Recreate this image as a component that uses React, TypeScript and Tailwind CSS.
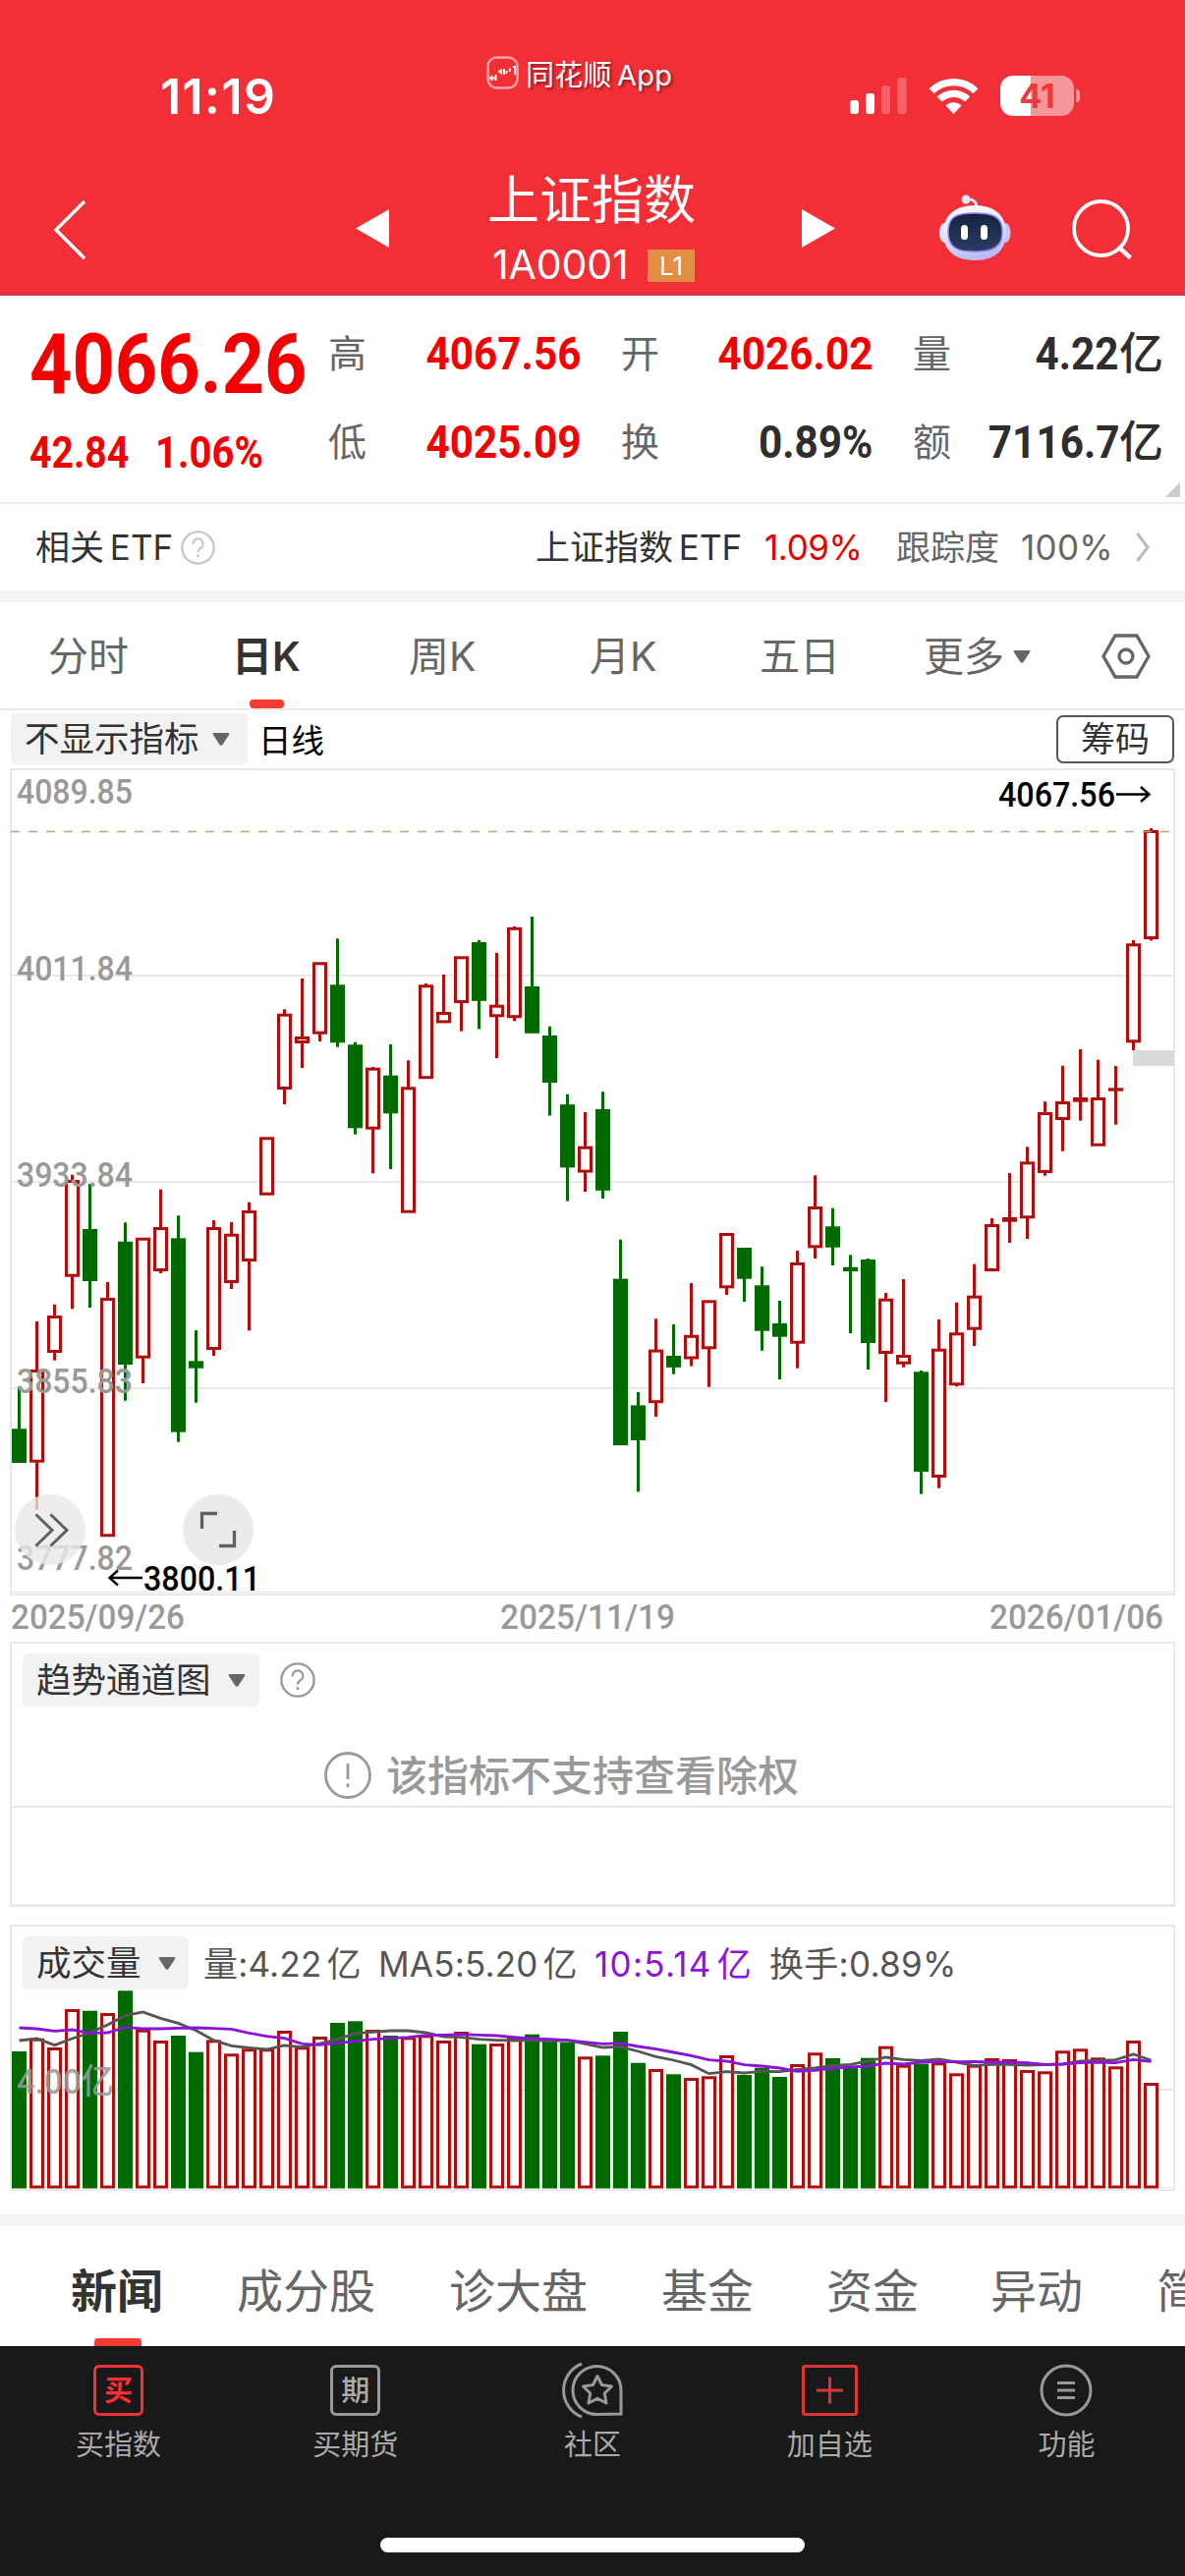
import React from 'react';

type Candle = [number, number, number, number, 'r' | 'g'];

// high, body top, body bottom, low (y on the chart), direction
const candles: Candle[] = [
  [1411.7, 1454.3, 1489, 1489, 'g'], [1345, 1394, 1488.7, 1536.7, 'r'], [1327.7, 1339, 1377, 1384.7, 'r'],
  [1195.7, 1201, 1299.7, 1332.3, 'r'], [1205, 1251, 1304, 1331, 'g'], [1305, 1321, 1564.3, 1564.3, 'r'],
  [1244.3, 1263.7, 1389, 1425.7, 'g'], [1259.7, 1259.7, 1382.7, 1408, 'r'], [1210.7, 1249, 1294, 1296, 'r'],
  [1237.3, 1260.3, 1457.7, 1467.7, 'g'], [1354, 1385.3, 1392.7, 1427.7, 'g'], [1242, 1249, 1374, 1380, 'r'],
  [1244, 1255.7, 1306, 1312, 'r'], [1223.7, 1232, 1284, 1354.3, 'r'], [1157.3, 1157.3, 1216.7, 1216.7, 'r'],
  [1027.3, 1031.7, 1109, 1124, 'r'], [996, 1055, 1062, 1087, 'r'], [979.3, 979.3, 1052.7, 1060, 'r'],
  [955.3, 1002.3, 1061.3, 1065.7, 'g'], [1060.7, 1063.3, 1148.3, 1154.7, 'g'], [1086, 1086.7, 1149.7, 1194.3, 'r'],
  [1063, 1094.7, 1133.3, 1190, 'g'], [1079.3, 1106.3, 1234.7, 1234.7, 'r'], [1001, 1002.3, 1098.2, 1098.2, 'r'],
  [992, 1030, 1041.4, 1041.4, 'r'], [973.3, 973.3, 1021, 1049.6, 'r'], [956.8, 959, 1018.8, 1047.4, 'g'],
  [969.8, 1022.7, 1035.3, 1077, 'r'], [943, 943.8, 1036.2, 1039.2, 'r'], [933, 1004, 1051.8, 1051.8, 'g'],
  [1044.8, 1054, 1102, 1135.5, 'g'], [1113.8, 1124.2, 1188.4, 1222.6, 'g'], [1132, 1166.7, 1193.6, 1213, 'r'],
  [1111.2, 1129, 1211.8, 1220, 'g'], [1261.7, 1301.6, 1471.1, 1471.1, 'g'], [1417, 1430.4, 1466, 1518.4, 'g'],
  [1342.3, 1373.6, 1428.2, 1442, 'r'], [1348, 1380, 1391.8, 1398.7, 'g'], [1306, 1358.8, 1383.5, 1390.5, 'r'],
  [1323.3, 1323.3, 1373.3, 1411.7, 'r'], [1255, 1255, 1311.3, 1318, 'r'], [1270, 1270, 1301.7, 1325, 'g'],
  [1289.3, 1308.3, 1354.7, 1374.7, 'g'], [1324, 1347, 1360.7, 1404, 'g'], [1273, 1285, 1367.7, 1392.7, 'r'],
  [1196.3, 1228, 1270.3, 1281, 'r'], [1229.7, 1248.3, 1269.7, 1288, 'g'], [1277.3, 1289.7, 1294, 1357, 'g'],
  [1281, 1282, 1367, 1394, 'g'], [1316, 1321.7, 1378, 1427, 'r'], [1302, 1379, 1388.7, 1391.7, 'r'],
  [1395, 1396.3, 1498, 1520.7, 'g'], [1343, 1372.7, 1504, 1514.7, 'r'], [1325.7, 1356.3, 1410.3, 1411.3, 'r'],
  [1286.7, 1318.7, 1353.7, 1370, 'r'], [1240, 1246, 1294, 1294, 'r'], [1194, 1239, 1243.7, 1265, 'r'],
  [1167.3, 1182.3, 1240.3, 1261, 'r'], [1121.3, 1132, 1194, 1196.7, 'r'], [1084.7, 1121, 1140, 1171.7, 'r'],
  [1068, 1117, 1121.7, 1140.7, 'r'], [1078.7, 1117, 1166.7, 1166.7, 'r'], [1085, 1107.3, 1110.7, 1144.7, 'r'],
  [957, 960.3, 1061.3, 1069, 'r'], [843, 845, 956, 957.3, 'r'],
];

const volumeTops = [
  2088, 2074.7, 2084, 2045, 2046.7, 2049, 2026.3, 2065.7, 2077, 2072, 2088.7, 2076.3, 2090.3, 2085.3, 2085.3, 2067,
  2083.3, 2073, 2059, 2057.3, 2066, 2072, 2073.3, 2071.3, 2077, 2068, 2080.7, 2080, 2073.7, 2070.7, 2077, 2078.7,
  2093.3, 2092.3, 2068, 2099.7, 2106, 2111.3, 2115, 2113.3, 2092, 2112, 2104.7, 2114, 2101, 2089.3, 2095, 2105,
  2094.7, 2082.7, 2101.7, 2100.7, 2099.3, 2110.3, 2101.7, 2095, 2096, 2107, 2108.3, 2087.3, 2085.3, 2094.3, 2103.3,
  2077, 2120,
];

const ma5 = [
  381, 375, 395, 375, 357, 333, 305, 294, 313, 328, 350, 380, 397, 403, 408, 396, 401, 390, 377, 359, 355, 351, 351,
  357, 369, 371, 377, 380, 381, 380, 383, 380, 391, 402, 400, 414, 430, 441, 455, 482, 476, 480, 475, 476, 469, 465,
  457, 454, 444, 432, 439, 442, 438, 447, 457, 454, 454, 456, 455, 453, 444, 442, 440, 423, 441,
];
const ma10 = [
  342, 345, 352, 348, 358, 357, 340, 345, 345, 343, 342, 344, 346, 358, 368, 374, 391, 394, 389, 383, 377, 374, 371,
  365, 364, 362, 364, 366, 371, 375, 377, 380, 386, 391, 389, 399, 407, 417, 427, 440, 444, 455, 459, 465, 475, 472,
  466, 462, 459, 450, 453, 447, 446, 446, 445, 447, 447, 449, 454, 453, 449, 447, 449, 439, 445,
];

const RED = '#ae0e0e';
const GREEN = '#006900';
const cx = (i: number) => 19.5 + 18 * i;
const line = (values: number[]) => values.map((v, i) => `${cx(i)},${1950 + v / 3}`).join(' ');

function CandleShape({ c, x }: { c: Candle; x: number }) {
  const [hi, top, bottom, lo, dir] = c;
  const color = dir === 'r' ? RED : GREEN;
  const hollow = dir === 'r' && bottom - top > 6;
  return (
    <g>
      {hi < top && <rect x={x - 1.5} y={hi} width={3} height={top - hi + 1} fill={color} />}
      {lo > bottom && <rect x={x - 1.5} y={bottom - 1} width={3} height={lo - bottom + 1} fill={color} />}
      {hollow ? (
        <rect x={x - 6} y={top + 1.5} width={12} height={bottom - top - 3} fill="#fff" stroke={color} strokeWidth={3} />
      ) : (
        <rect x={x - 7.5} y={top} width={15} height={bottom - top} fill={color} />
      )}
    </g>
  );
}

function Num({ x, y, w, children, fill = '#999' }: { x: number; y: number; w: number; children: string; fill?: string }) {
  return (
    <text x={x} y={y} textLength={w} lengthAdjust="spacingAndGlyphs" fill={fill} fontSize={35} fontWeight={500} fontFamily="Roboto, sans-serif">
      {children}
    </text>
  );
}

function PriceChart() {
  return (
    <svg className="block w-[1206px] h-[886px]" viewBox="0 782 1206 886">
      <g fill="#e8e8e8">
        <rect x={10} y={782} width={1186} height={2} />
        <rect x={10} y={782} width={2} height={842} />
        <rect x={1194} y={782} width={2} height={842} />
        <rect x={10} y={1620} width={1186} height={1} />
        <rect x={10} y={1622} width={1186} height={2} />
        {[992, 1202, 1412].map((y) => <rect key={y} x={12} y={y} width={1182} height={2} />)}
      </g>
      <rect x={1153} y={1069} width={42} height={16} fill="#dadada" />
      {candles.map((c, i) => <CandleShape key={i} c={c} x={cx(i)} />)}
      <path d="M11 846.5H1192" stroke="#d39b66" strokeWidth={1.4} strokeDasharray="9 9" />
      <Num x={17} y={818} w={118}>4089.85</Num>
      <Num x={17} y={998} w={118}>4011.84</Num>
      <Num x={17} y={1208} w={118}>3933.84</Num>
      <Num x={17} y={1418} w={118}>3855.83</Num>
      <Num x={17} y={1598} w={118}>3777.82</Num>
      <Num x={1016} y={821} w={119} fill="#000">4067.56</Num>
      <path d="M1136 808.5H1169M1161 801L1169.500 808.500L1161 816" fill="none" stroke="#000" strokeWidth={2.4} />
      <Num x={146} y={1619} w={119} fill="#000">3800.11</Num>
      <path d="M145 1606H112M120 1598.500L111.500 1606L120 1613.500" fill="none" stroke="#000" strokeWidth={2.4} />
      <circle cx={51} cy={1557} r={36} fill="#e9e9e9" fillOpacity={0.8} />
      <circle cx={222} cy={1557} r={36} fill="#ebebeb" />
      <path d="M36.500 1541.500L53 1557.500L36.500 1573.500M51.500 1541.500L68 1557.500L51.500 1573.500" fill="none" stroke="#606060" strokeWidth={3} />
      <path d="M205.500 1556V1540.500H221M223 1573.500H238.500V1558" fill="none" stroke="#606060" strokeWidth={3.3} />
      <Num x={11} y={1658} w={177}>2025/09/26</Num>
      <Num x={509} y={1658} w={178}>2025/11/19</Num>
      <Num x={1007} y={1658} w={177}>2026/01/06</Num>
    </svg>
  );
}

function VolumeChart() {
  return (
    <svg className="block w-[1206px] h-[205px]" viewBox="0 2025 1206 205">
      <g fill="#e8e8e8">
        <rect x={12} y={2126} width={1182} height={2} />
        <rect x={12} y={2226} width={1182} height={1} />
      </g>
      {volumeTops.map((top, i) =>
        candles[i][4] === 'g' ? (
          <rect key={i} x={cx(i) - 7.5} y={top} width={15} height={2227.5 - top} fill={GREEN} />
        ) : (
          <rect key={i} x={cx(i) - 6} y={top + 1.5} width={12} height={2224.5 - top} fill="#fff" stroke={RED} strokeWidth={3} />
        ),
      )}
      <text x={17} y={2131} textLength={99} lengthAdjust="spacingAndGlyphs" fill="#999" fillOpacity={0.9} fontSize={35} fontWeight={500} fontFamily="Roboto, 'Noto Sans CJK SC', sans-serif">4.00亿</text>
      <polyline points={line(ma5)} fill="none" stroke="#555" strokeWidth={2.8} />
      <polyline points={line(ma10)} fill="none" stroke="#8b12d6" strokeWidth={2.8} />
    </svg>
  );
}

function Caret() {
  return (
    <svg className="w-[18px] h-[13px]" viewBox="0 0 18 13">
      <path d="M1.500 0H16.500Q18 .5 17 2L10.500 12Q9 13.500 7.500 12L1 2Q0 .5 1.500 0Z" fill="#666" />
    </svg>
  );
}

function Question({ size, color }: { size: number; color: string }) {
  return (
    <svg width={size} height={size} viewBox="0 0 36 36" fill="none" stroke={color} strokeWidth={2.4}>
      <circle cx={18} cy={18} r={16.600} />
      <path d="M12.800 14.500A5.300 5.300 0 1 1 20.500 18.500Q18 20 18 22.500" strokeWidth={2.300} />
      <circle cx={18} cy={26.500} r={1.600} fill={color} stroke="none" />
    </svg>
  );
}

function StatusBar() {
  return (
    <div className="h-[150px] flex items-start">
      <span className="ml-[163px] mt-[68px] w-[332px] text-[50px] leading-[60px] font-semibold tracking-[1.4px]">11:19</span>
      <svg className="mt-[57px] w-[33px] h-[34px]" viewBox="0 0 33 34">
        <rect x={1.500} y={1.500} width={30} height={31} rx={9} fill="none" stroke="#fff" strokeOpacity={0.55} strokeWidth={2.500} />
        <path d="M3 22.500H8M5.500 20V25M9.500 19V25M12 16L15 14.500V18.500M18 13V19M21 15L20 18M24 12.500V16M27 11H29V19" stroke="#fff3e8" strokeWidth={2} fill="none" />
      </svg>
      <span className="ml-[7px] mt-[57px] w-[330px] text-[29px] leading-[40px] font-normal tracking-[0.2px] [text-shadow:2px_2px_3px_rgba(0,0,0,0.45)]">
        同花顺 <span className="ml-[-3px]">App</span>
      </span>
      <svg className="mt-[77px] w-[58px] h-[40px]" viewBox="865 77 58 40" fill="#fff">
        <rect x={865} y={102} width={9} height={14} rx={3} />
        <rect x={881} y={95} width={9} height={21} rx={3} />
        <rect x={897} y={87} width={9} height={29} rx={3} opacity={0.25} />
        <rect x={913.500} y={79} width={9} height={37} rx={3} opacity={0.25} />
      </svg>
      <svg className="ml-[22px] mt-[79px] w-[51px] h-[37px]" viewBox="0 0 51 37" fill="none" stroke="#fff" strokeWidth={7.200}>
        <path d="M3 13.800A32 32 0 0 1 48 13.800" />
        <path d="M11.300 22A20.500 20.500 0 0 1 39.700 22" />
        <path d="M25.500 37L17.500 28.500A11.500 11.500 0 0 1 33.500 28.500Z" fill="#fff" stroke="none" />
      </svg>
      <div className="ml-[22px] mt-[77px] w-[75px] h-[41px] rounded-[13px] bg-linear-to-r from-white from-[41%] to-[#f8979b] to-[41%] flex items-center justify-center">
        <span className="text-[34px] leading-none font-bold text-[#f0383f]">41</span>
      </div>
      <div className="mt-[91px] ml-[2px] w-[4px] h-[13px] rounded-r-full bg-[#f8979b]" />
    </div>
  );
}

function NavBar() {
  return (
    <div className="h-[149px] flex items-start">
      <svg className="ml-[54px] mt-[53px] w-[34px] h-[62px]" viewBox="0 0 34 62">
        <path d="M32 2L3 31L32 60" fill="none" stroke="#fff" strokeWidth={3.500} />
      </svg>
      <svg className="ml-[274px] mt-[63px] w-[34px] h-[39px]" viewBox="0 0 34 39"><path d="M34 0V39L0 19.500Z" fill="#fff" /></svg>
      <div className="ml-[100px] mt-[22px] w-[212px] flex flex-col">
        <span className="text-[53px] leading-[64px] whitespace-nowrap">上证指数</span>
        <div className="mt-[11px] flex items-center pl-[5px]">
          <span className="text-[41px] leading-[44px] w-[158px] tracking-[-0.1px]">1A0001</span>
          <span className="mt-[2px] w-[48px] h-[33px] bg-[#e28e44] text-[26px] leading-[33px] text-center">L1</span>
        </div>
      </div>
      <svg className="ml-[108px] mt-[63px] w-[34px] h-[39px]" viewBox="0 0 34 39"><path d="M0 0V39L34 19.500Z" fill="#fff" /></svg>
      <svg className="ml-[106px] mt-[48px] w-[73px] h-[68px]" viewBox="0 0 73 68">
        <defs>
          <linearGradient id="head" x1="0" y1="0" x2="0.300" y2="1">
            <stop offset="0" stopColor="#ffffff" /><stop offset="0.600" stopColor="#dfe3f8" /><stop offset="1" stopColor="#b9bdf5" />
          </linearGradient>
          <linearGradient id="face" x1="0" y1="0" x2="0" y2="1">
            <stop offset="0" stopColor="#16233f" /><stop offset="1" stopColor="#2b3c63" />
          </linearGradient>
        </defs>
        <circle cx={27} cy={5} r={4.500} fill="#e9eafa" />
        <path d="M28 5Q38 4 38 14" fill="none" stroke="#dfe0f6" strokeWidth={3} />
        <ellipse cx={5} cy={39} rx={5} ry={10} fill="#dfe3fa" />
        <ellipse cx={67.500} cy={39} rx={5} ry={10} fill="#c4c5f2" />
        <path d="M36 11C57 11 68 22 68 39C68 57 56 67 36 67C16 67 4 57 4 39C4 22 15 11 36 11Z" fill="url(#head)" />
        <path d="M36 19C54 19 64 22 64 38C64 54 54 58 36 58C18 58 9 54 9 38C9 22 18 19 36 19Z" fill="url(#face)" stroke="#8f7df0" strokeWidth={1.500} />
        <rect x={22} y={31} width={7} height={15} rx={3.500} fill="#fff" />
        <rect x={42} y={31} width={7} height={15} rx={3.500} fill="#fff" />
      </svg>
      <svg className="ml-[62px] mt-[52px] w-[62px] h-[62px]" viewBox="0 0 62 62" fill="none" stroke="#fff" strokeWidth={3.800}>
        <circle cx={29.500} cy={30.500} r={27.500} /><path d="M48 50L59.500 60.500" strokeWidth={4.500} />
      </svg>
    </div>
  );
}

function Quote() {
  const cells = [
    ['高', '4067.56', true], ['开', '4026.02', true], ['量', '4.22亿', false],
    ['低', '4025.09', true], ['换', '0.89%', false], ['额', '7116.7亿', false],
  ] as const;
  return (
    <section className="relative h-[210px] flex">
      <div className="w-[334px] pl-[30px] text-[#f50000] font-[Roboto] font-bold whitespace-nowrap">
        <div className="mt-[27px] w-[304px] text-[86px] leading-[86px] origin-left scale-x-[0.88]">4066.26</div>
        <div className="mt-[23px] flex text-[45px] leading-[48px]">
          <span className="w-[128px] origin-left scale-x-[0.87]">42.84</span>
          <span className="w-[128px] origin-left scale-x-[0.89]">1.06%</span>
        </div>
      </div>
      <div className="mt-[14px] grid h-[180px] grid-cols-[257px_256px_255px] gap-x-[41px] grid-rows-2">
        {cells.map(([k, v, red]) => (
          <div key={k} className="flex items-center">
            <span className="text-[39px] leading-[60px] text-[#666]">{k}</span>
            <span className={`ml-auto text-[47px] leading-[60px] origin-right scale-x-[0.9] font-bold font-[Roboto] ${red ? 'text-[#f50000]' : 'text-[#2e2e2e]'}`}>
              {v.replace('亿', '')}
            </span>
            {v.endsWith('亿') && <span className="text-[45px] leading-[60px] font-medium text-[#2e2e2e]">亿</span>}
          </div>
        ))}
      </div>
      <svg className="absolute right-[5px] bottom-[5px] w-[15px] h-[15px]" viewBox="0 0 15 15"><path d="M15 0V15H0Z" fill="#ccc" /></svg>
    </section>
  );
}

function EtfRow() {
  return (
    <section className="h-[90px] border-t-2 border-[#ececec] flex items-center text-[35px] leading-[50px] text-[#333] whitespace-nowrap">
      <span className="ml-[36px] w-[148px]">相关 <span className="ml-[-4px]">ETF</span></span>
      <Question size={35} color="#c8c8c8" />
      <span className="ml-[326px] w-[233px]">上证指数 <span className="ml-[-4px]">ETF</span></span>
      <span className="w-[134px] text-[#e60000] tracking-[-0.4px]">1.09%</span>
      <span className="w-[127px] text-[#666]">跟踪度</span>
      <span className="w-[117px] text-[#666] tracking-[0.3px]">100%</span>
      <svg className="w-[14px] h-[30px]" viewBox="0 0 14 30"><path d="M1.500 1L12 15L1.500 29" fill="none" stroke="#bbb" strokeWidth={3} /></svg>
    </section>
  );
}

function PeriodTabs() {
  return (
    <nav className="relative h-[110px] border-b-2 border-[#ebebeb] flex items-center pt-[2px] text-[41px] leading-[60px] text-[#666] whitespace-nowrap">
      <span className="ml-[49px] w-[187px]">分时</span>
      <span className="w-[180px] font-bold text-[#333]">日<span className="font-semibold">K</span></span>
      <span className="w-[184px]">周K</span>
      <span className="w-[173px]">月K</span>
      <span className="w-[167px]">五日</span>
      <span className="w-[91px]">更多</span>
      <Caret />
      <svg className="ml-[72px] w-[50px] h-[46px]" viewBox="0 0 50 46" fill="none" stroke="#666" strokeWidth={3.300}>
        <path d="M14 2H36L48 23L36 44H14L2 23Z" /><circle cx={25} cy={23} r={7} />
      </svg>
      <i className="absolute left-[254px] bottom-0 w-[35px] h-[9px] rounded-[4px] bg-[#f43b33]" />
    </nav>
  );
}

function Chip({ label, className }: { label: string; className: string }) {
  return (
    <span className={`flex items-center justify-between bg-[#f2f2f2] rounded-[6px] pl-[14px] text-[35.5px] leading-[52px] text-[#333] whitespace-nowrap ${className}`}>
      <span className="mt-[2px]">{label}</span><Caret />
    </span>
  );
}

function NewsTabs() {
  return (
    <nav className="relative h-[122px] overflow-hidden flex items-center pt-[10px] text-[47px] leading-[70px] text-[#666] whitespace-nowrap">
      <span className="ml-[72px] w-[169px] shrink-0 font-bold text-[#333]">新闻</span>
      <span className="w-[216px] shrink-0">成分股</span>
      <span className="w-[216px] shrink-0">诊大盘</span>
      <span className="w-[168px] shrink-0">基金</span>
      <span className="w-[167px] shrink-0">资金</span>
      <span className="w-[169px] shrink-0">异动</span>
      <span className="shrink-0">简况</span>
      <i className="absolute left-[96px] bottom-[-4px] w-[48px] h-[12px] rounded-[4px] bg-[#f43b33]" />
    </nav>
  );
}

function BottomBar() {
  const items = [
    {
      label: '买指数',
      icon: <span className="w-[51px] h-[52px] border-[3px] border-[#ee3339] rounded-[6px] text-[29px] leading-[47px] text-center font-bold text-[#ff2d37]">买</span>,
    },
    {
      label: '买期货',
      icon: <span className="w-[51px] h-[52px] border-[3px] border-[#999] rounded-[6px] text-[29px] leading-[47px] text-center font-medium text-[#aaa]">期</span>,
    },
    {
      label: '社区',
      icon: (
        <svg className="w-[62px] h-[58px]" viewBox="0 0 62 58" fill="none" stroke="#999" strokeWidth={3}>
          <path d="M20 2A29 29 0 0 0 20 56" />
          <path d="M60 53V29A24.500 24.500 0 1 0 35.500 53.500Z" />
          <path d="M36 14.500L40.500 23.500L50.500 25L43.300 32L45 42L36 37.300L27 42L28.700 32L21.500 25L31.500 23.500Z" strokeLinejoin="round" />
        </svg>
      ),
    },
    {
      label: '加自选',
      icon: (
        <svg className="w-[57px] h-[52px]" viewBox="0 0 57 52" fill="none" stroke="#dd3535" strokeWidth={3}>
          <rect x={1.500} y={1.500} width={54} height={49} rx={2} /><path d="M15 26H42M28.500 12.500V39.500" />
        </svg>
      ),
    },
    {
      label: '功能',
      icon: (
        <svg className="w-[54px] h-[54px]" viewBox="0 0 54 54" fill="none" stroke="#999" strokeWidth={3}>
          <circle cx={27} cy={27} r={25} /><path d="M18 19.500H36M18 27H36M18 34.500H36" />
        </svg>
      ),
    },
  ];
  return (
    <footer className="h-[234px] bg-[#191919] flex flex-col items-center">
      <div className="w-full h-[195px] grid grid-cols-5">
        {items.map((it) => (
          <div key={it.label} className="flex flex-col items-center pt-[15px]">
            <div className="h-[60px] flex items-center">{it.icon}</div>
            <span className="mt-[6px] text-[29px] leading-[40px] text-[#aaa]">{it.label}</span>
          </div>
        ))}
      </div>
      <div className="w-[432px] h-[15px] rounded-full bg-white" />
    </footer>
  );
}

export default function App() {
  return (
    <main className="w-[1206px] h-[2622px] overflow-hidden bg-white flex flex-col font-[Inter,'Noto_Sans_CJK_SC',sans-serif]">
      <header className="h-[301px] shrink-0 bg-[#f22f36] border-b-2 border-[#c9404a] text-white">
        <StatusBar />
        <NavBar />
      </header>
      <Quote />
      <EtfRow />
      <div className="h-[12px] bg-[#f4f4f4]" />
      <PeriodTabs />
      <div className="h-[59px] flex items-center pb-[1px]">
        <Chip label="不显示指标" className="ml-[11px] w-[241px] h-[52px] pr-[18px]" />
        <span className="mt-[3px] ml-[11px] text-[33.5px] leading-[50px] text-black">日线</span>
        <span className="ml-auto mr-[11px] w-[120px] h-[49px] border-2 border-[#555] rounded-[7px] text-center text-[35px] leading-[45px] text-[#333]">筹码</span>
      </div>
      <PriceChart />
      <section className="mt-[3px] mx-[10px] h-[270px] shrink-0 border-2 border-[#e8e8e8]">
        <div className="h-[165px]">
          <div className="pt-[10px] pl-[11px] flex items-center">
            <Chip label="趋势通道图" className="w-[241px] h-[54px] pr-[14px]" />
            <span className="ml-[21px]"><Question size={36} color="#999" /></span>
          </div>
          <div className="mt-[39px] ml-[318px] flex items-center text-[#999]">
            <svg className="w-[48px] h-[48px]" viewBox="0 0 48 48" fill="none" stroke="#999" strokeWidth={2.800}>
              <circle cx={24} cy={24} r={22.500} /><path d="M24 12V28M24 32.500V36" />
            </svg>
            <span className="mt-[2px] ml-[15px] text-[42px] leading-[60px] font-medium">该指标不支持查看除权</span>
          </div>
        </div>
        <div className="h-[101px] border-t-2 border-b border-[#e8e8e8] mb-[2px]" />
      </section>
      <section className="mt-[18px] h-[271px] shrink-0 relative flex flex-col">
        <div className="h-[66px] mx-[10px] border-2 border-b-0 border-[#e8e8e8] pt-[10px] pl-[11px] flex items-start text-[35px] leading-[56px] text-[#555] whitespace-nowrap">
          <Chip label="成交量" className="w-[169px] h-[54px] pr-[13px]" />
          <span className="ml-[15px] w-[178px] tracking-[0.2px]">量:4.22<span className="ml-[5px]">亿</span></span>
          <span className="w-[220px] tracking-[0.2px]">MA5:5.20<span className="ml-[5px]">亿</span></span>
          <span className="w-[178px] text-[#9010e0] tracking-[1.3px]">10:5.14<span className="ml-[5px]">亿</span></span>
          <span className="tracking-[0.3px]">换手:0.89%</span>
        </div>
        <div className="h-[205px] w-[1206px] relative">
          <div className="absolute inset-x-[10px] inset-y-0 border-2 border-t-0 border-[#e8e8e8]" />
          <div className="relative"><VolumeChart /></div>
        </div>
      </section>
      <div className="mt-[24px] h-[12px] shrink-0 bg-[#f4f4f4]" />
      <NewsTabs />
      <BottomBar />
    </main>
  );
}
